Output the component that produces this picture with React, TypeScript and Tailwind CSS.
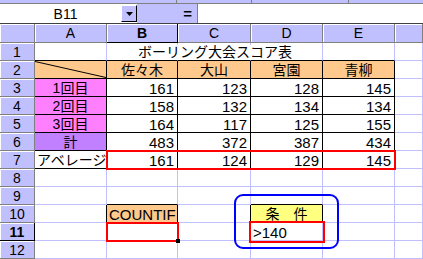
import React from "react";

const LL = "border-r border-b border-[#c0c0ff]";
const BB = "border-r border-b border-black";
const BL = "border-r border-b border-r-black border-b-[#c0c0ff]";
const LB = "border-r border-b border-r-[#c0c0ff] border-b-black";

const HDR =
  "flex items-center justify-center bg-[#c0c0ff] border-r border-b border-[#808080] shadow-[inset_1px_1px_0_#ffffff] text-[14px] leading-none text-black";
const HDR_SEL =
  "flex items-center justify-center bg-[#c0c0ff] border-r border-b border-black shadow-[inset_1px_1px_0_#ffffff] text-[14px] leading-none text-black font-bold";

const RIGHT = "justify-end pr-[3px]";
const CENTER = "justify-center";
const LEFT = "justify-start pl-[2px]";

function Cell({
  b,
  cls = "",
  jp = false,
  children,
}: {
  b: string;
  cls?: string;
  jp?: boolean;
  children?: React.ReactNode;
}) {
  return (
    <div className={"relative flex items-end overflow-visible " + b + " " + cls}>
      {children !== undefined ? (
        <span
          className={
            jp
              ? "whitespace-nowrap text-[14px] leading-[15px]"
              : "whitespace-nowrap text-[15px] leading-[15px]"
          }
        >
          {children}
        </span>
      ) : null}
    </div>
  );
}

function RowHead({ n, sel = false }: { n: number; sel?: boolean }) {
  return <div className={sel ? HDR_SEL : HDR}>{n}</div>;
}

const scores = [
  ["1回目", "161", "123", "128", "145"],
  ["2回目", "158", "132", "134", "134"],
  ["3回目", "164", "117", "125", "155"],
];

function Num({ w, v }: { w: string; v: string }) {
  return (
    <div className={w + " flex items-end " + BB + " " + RIGHT}>
      <span className="whitespace-nowrap text-[15px] leading-[15px]">{v}</span>
    </div>
  );
}

export default function App() {
  return (
    <div className="relative w-[423px] h-[259px] overflow-hidden bg-white text-black font-['Liberation_Sans','Noto_Sans_CJK_JP',sans-serif]">
      {/* toolbar remnant */}
      <div className="flex h-[4px] bg-[#c0c0ff] border-b border-[#808080]">
        <div className="w-[177px] border-r border-[#808080]" />
        <div className="w-[75px] border-r border-[#808080]" />
        <div className="w-[97px] border-r border-[#808080]" />
        <div className="flex-1" />
      </div>

      {/* formula bar */}
      <div className="flex h-[20px] border-b border-[#404040] bg-white">
        <div className="w-[121px] flex items-center justify-center pl-[10px] text-[14px] leading-none">
          B11
        </div>
        <div className="w-[16px] my-[1px] bg-[#c0c0ff] border border-t-white border-l-white border-r-black border-b-black flex items-center justify-center">
          <svg width="7" height="4" viewBox="0 0 7 4">
            <path d="M0 0H7L3.5 4Z" fill="#000" />
          </svg>
        </div>
        <div className="w-[60px] bg-[#c0c0ff] flex items-center justify-end pr-[5px] text-[15px] font-bold leading-none">
          =
        </div>
        <div className="flex-1 border-l border-[#808080]" />
      </div>

      {/* sheet grid */}
      <div className="grid grid-cols-[35px_72px_71px_73px_72px_72px_28px] grid-rows-[19px_repeat(12,18px)]">
        {/* column headers */}
        <div className={HDR} />
        <div className={HDR}>A</div>
        <div className={HDR_SEL}>B</div>
        <div className={HDR}>C</div>
        <div className={HDR}>D</div>
        <div className={HDR}>E</div>
        <div className={HDR} />

        {/* row 1 : title centred across A1:E1, gridlines kept */}
        <RowHead n={1} />
        <Cell b={LB} cls="row-start-2 col-start-2" />
        <Cell b={LB} cls="row-start-2 col-start-3" />
        <Cell b={LB} cls="row-start-2 col-start-4" />
        <Cell b={LB} cls="row-start-2 col-start-5" />
        <Cell b={LB} cls="row-start-2 col-start-6" />
        <Cell b={LL} cls="row-start-2 col-start-7" />
        <div className="row-start-2 col-[2/7] z-10 flex items-end justify-center pb-[1px] pointer-events-none">
          <span className="whitespace-nowrap text-[14px] leading-[15px] bg-white">
            ボーリング大会スコア表
          </span>
        </div>

        {/* row 2 */}
        <RowHead n={2} />
        <div className={"relative bg-[#ffc88c] " + BB}>
          <svg className="absolute inset-0" width="71" height="17" viewBox="0 0 71 17">
            <line x1="0" y1="0.5" x2="71" y2="16.5" stroke="#000" strokeWidth="1" />
          </svg>
        </div>
        <Cell b={BB} jp cls={"bg-[#ffc88c] " + CENTER}>佐々木</Cell>
        <Cell b={BB} jp cls={"bg-[#ffc88c] " + CENTER}>大山</Cell>
        <Cell b={BB} jp cls={"bg-[#ffc88c] " + CENTER}>宮園</Cell>
        <Cell b={BB} jp cls={"bg-[#ffc88c] " + CENTER}>青柳</Cell>
        <Cell b={LL} />

        {/* rows 3-5 */}
        {scores.map((r, i) => (
          <React.Fragment key={i}>
            <RowHead n={i + 3} />
            <Cell b={BB} jp cls={"bg-[#ff80ff] " + CENTER}>{r[0]}</Cell>
            <Cell b={BB} cls={RIGHT}>{r[1]}</Cell>
            <Cell b={BB} cls={RIGHT}>{r[2]}</Cell>
            <Cell b={BB} cls={RIGHT}>{r[3]}</Cell>
            <Cell b={BB} cls={RIGHT}>{r[4]}</Cell>
            <Cell b={LL} />
          </React.Fragment>
        ))}

        {/* row 6 */}
        <RowHead n={6} />
        <Cell b={BB} jp cls={"bg-[#c080ff] " + CENTER}>計</Cell>
        <Cell b={BB} cls={RIGHT}>483</Cell>
        <Cell b={BB} cls={RIGHT}>372</Cell>
        <Cell b={BB} cls={RIGHT}>387</Cell>
        <Cell b={BB} cls={RIGHT}>434</Cell>
        <Cell b={LL} />

        {/* row 7 */}
        <RowHead n={7} />
        <Cell b={BB} jp cls={LEFT}>アベレージ</Cell>
        <div className="col-span-4 relative z-10 flex outline-2 outline-[#ff0000] -outline-offset-1">
          <Num w="w-[71px]" v="161" />
          <Num w="w-[73px]" v="124" />
          <Num w="w-[72px]" v="129" />
          <Num w="w-[72px]" v="145" />
        </div>
        <Cell b={LL} />

        {/* row 8 */}
        <RowHead n={8} />
        <Cell b={LL} />
        <Cell b={LL} />
        <Cell b={LL} />
        <Cell b={LL} />
        <Cell b={LL} />
        <Cell b={LL} />

        {/* row 9 */}
        <RowHead n={9} />
        <Cell b={LL} />
        <Cell b={LB} />
        <Cell b={LL} />
        <Cell b={LB} />
        <Cell b={LL} />
        <Cell b={LL} />

        {/* row 10 */}
        <RowHead n={10} />
        <Cell b={BL} />
        <Cell b={BB} cls={"bg-[#ffc88c] " + LEFT}>COUNTIF</Cell>
        <Cell b={BL} />
        <Cell b={BB} jp cls={"bg-[#ffff80] " + CENTER}>条　件</Cell>
        <Cell b={LL} />
        <Cell b={LL} />

        {/* row 11 */}
        <RowHead n={11} sel />
        <Cell b={LL} />
        <div className={"relative z-10 outline-2 outline-[#ff0000] -outline-offset-1 " + LL}>
          <div className="absolute right-[-3px] bottom-[-3px] w-[4px] h-[4px] bg-black z-20" />
        </div>
        <Cell b={LL} />
        <Cell b={LL} cls={"z-10 outline-2 outline-[#ff0000] outline-offset-0 " + LEFT}>&gt;140</Cell>
        <Cell b={LL} />
        <Cell b={LL} />

        {/* row 12 */}
        <RowHead n={12} />
        <Cell b={LL} />
        <Cell b={LL} />
        <Cell b={LL} />
        <Cell b={LL} />
        <Cell b={LL} />
        <Cell b={LL} />
      </div>

      {/* drawing: blue rounded rectangle */}
      <div className="absolute left-[234px] top-[194px] w-[105px] h-[55px] border-2 border-[#0000ff] rounded-[9px] z-30" />
    </div>
  );
}
